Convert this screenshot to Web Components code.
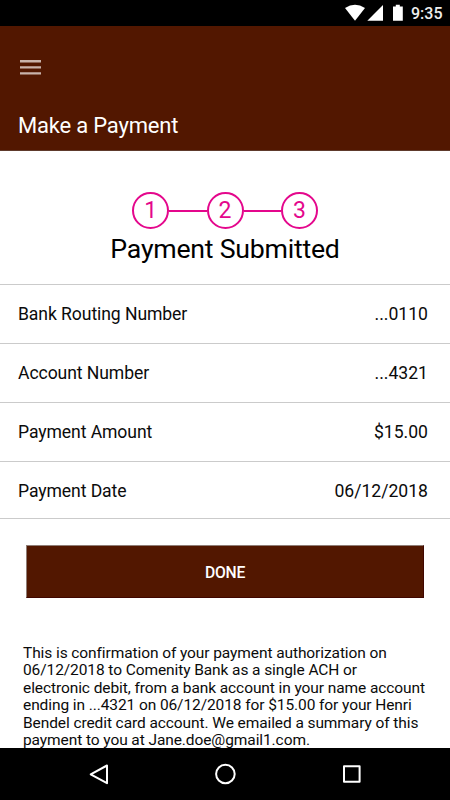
<!DOCTYPE html>
<html lang="en">
<head>
<meta charset="utf-8">
<title>Make a Payment</title>
<style>
html,body{margin:0;height:100%;background:#fff}
body{font-family:Roboto,"Liberation Sans",sans-serif;color:#0b0b0b;overflow:hidden}
</style>
</head>
<body>
<payment-screen></payment-screen>
<script>
const define = (name, html) => customElements.define(name, class extends HTMLElement {
  constructor() {
    super();
    this.attachShadow({ mode: "open" }).innerHTML = html;
  }
});

define("status-bar", `<style>
:host{display:flex;height:26px;background:#000;color:#fff;justify-content:flex-end;flex:none}
svg{width:64px;height:26px;flex:none;margin-right:3px}
time{font-size:16px;font-weight:500;line-height:27px;width:39px;color:#eee;white-space:nowrap}
</style>
<svg viewBox="0 0 64 26" fill="#fff"><path d="M1 8Q11 1.5 21 8L11 20.7Z"/><path d="M39 5V20.7H23.3Z"/><path d="M49 6.4h2.8V4.8h4v1.6h3V20.7H49Z"/></svg>
<time>9:35</time>`);

define("app-header", `<style>
:host{display:flex;flex-direction:column;height:125px;background:#521700;color:#fff;flex:none;box-sizing:border-box;border-bottom:1px solid #5e3a2c;padding-left:18px}
svg{width:24px;height:17px;margin-top:33px;flex:none}
h1{font-size:22px;letter-spacing:-.2px;font-weight:400;line-height:28px;margin:36px 0 0;white-space:nowrap}
</style>
<svg viewBox="0 0 24 17" fill="#c9b3aa"><path d="M2 1h21v2.5H2zM2 7.2h21v2.3H2zM2 13.2h21v2.3H2z"/></svg>
<h1><slot></slot></h1>`);

define("step-progress", `<style>
:host{display:flex;align-items:center;justify-content:center;color:#e4078c}
span{box-sizing:border-box;width:37px;height:37px;border:2px solid;border-radius:50%;text-align:center;font-size:23px;line-height:33px;flex:none}
i{width:37.4px;height:2px;background:currentColor}
</style><span>1</span><i></i><span>2</span><i></i><span>3</span>`);

define("detail-row", `<style>
:host{display:flex;justify-content:space-between;align-items:center;box-sizing:border-box;height:59px;border-top:1px solid #cbcbcb;padding:0 22px 0 18px;font-size:17.6px;line-height:22px;white-space:nowrap}
::slotted([slot=label]){letter-spacing:-.09px}
:host(:last-child){height:57px;padding-top:2px}
</style><slot name="label"></slot><slot name="value"></slot>`);

define("action-button", `<style>
:host{display:block;margin:26px 26px 0}
button{display:block;box-sizing:border-box;width:398px;height:53px;border:1px solid #400600;border-top-color:#8f7d76;border-left-color:#8f7d76;background:#521700;color:#fff;font:500 15.7px Roboto,sans-serif;letter-spacing:-.2px;padding:2px 0 0}
</style><button><slot></slot></button>`);

define("text-line", `<style>:host{display:block;white-space:nowrap}</style><slot></slot>`);

define("system-nav", `<style>
:host{display:block;height:52px;background:#000;flex:none}
svg{display:block}
</style><svg width="450" height="52" viewBox="0 0 450 52" fill="none" stroke="#fff" stroke-width="2" stroke-linejoin="round"><path d="M107 17.5V35.2L90.7 26.3Z"/><circle cx="225.4" cy="26" r="9.3"/><rect x="344" y="18.2" width="15.6" height="15.6"/></svg>`);

define("payment-screen", `<style>
:host{display:flex;flex-direction:column;width:450px;height:800px;background:#fff}
main{flex:1;min-height:0;overflow:hidden}
step-progress{margin-top:41px}
h2{margin:4px 0 0;height:51px;text-align:center;font-size:26.7px;letter-spacing:-.24px;font-weight:400;line-height:33px;white-space:nowrap;color:#000}
.rows{border-bottom:1px solid #cbcbcb}
p{margin:46.5px 0 0 23px;font-size:15.5px;letter-spacing:-.09px;line-height:17.5px}
</style>
<status-bar></status-bar>
<app-header>Make a Payment</app-header>
<main>
<step-progress></step-progress>
<h2>Payment Submitted</h2>
<div class="rows">
<detail-row><span slot="label">Bank Routing Number</span><span slot="value">...0110</span></detail-row>
<detail-row><span slot="label">Account Number</span><span slot="value">...4321</span></detail-row>
<detail-row><span slot="label">Payment Amount</span><span slot="value">$15.00</span></detail-row>
<detail-row><span slot="label">Payment Date</span><span slot="value">06/12/2018</span></detail-row>
</div>
<action-button>DONE</action-button>
<p><text-line>This is confirmation of your payment authorization on</text-line><text-line>06/12/2018 to Comenity Bank as a single ACH or</text-line><text-line>electronic debit, from a bank account in your name account</text-line><text-line>ending in ...4321 on 06/12/2018 for $15.00 for your Henri</text-line><text-line>Bendel credit card account. We emailed a summary of this</text-line><text-line>payment to you at Jane.doe@gmail1.com.</text-line></p>
</main>
<system-nav></system-nav>`);
</script>
</body>
</html>
